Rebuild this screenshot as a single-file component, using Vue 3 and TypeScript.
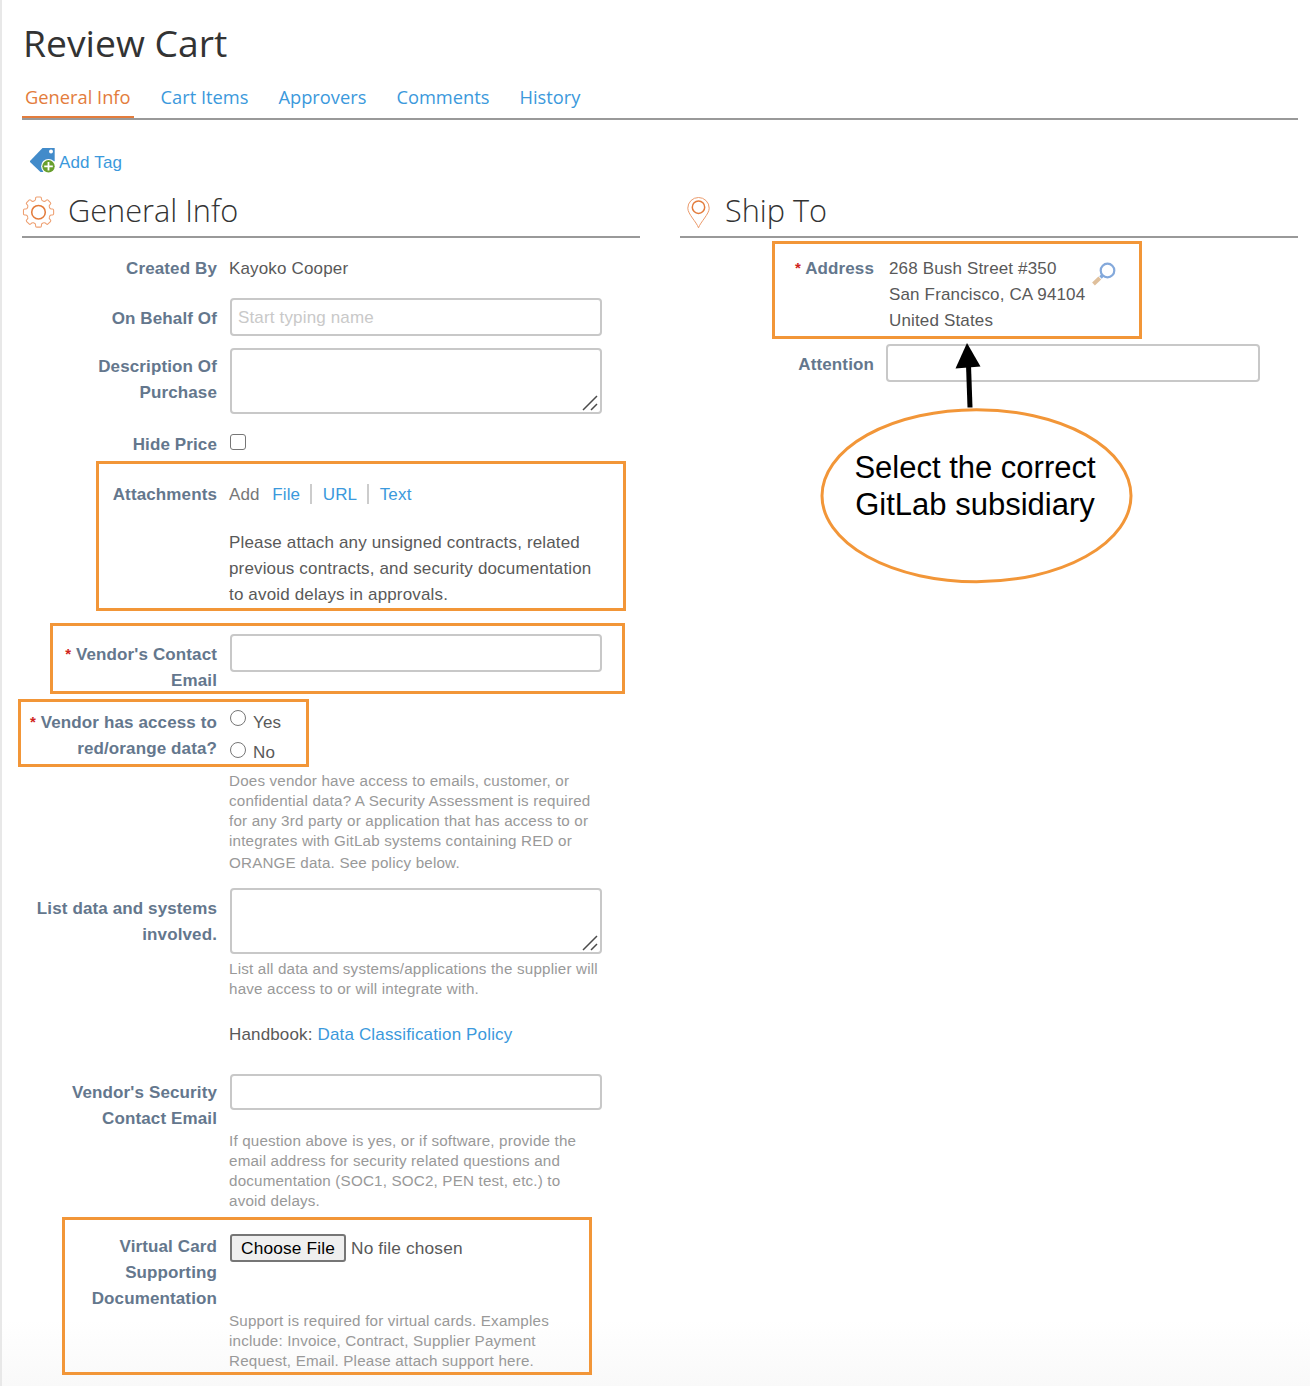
<script setup lang="ts">
import { ref } from 'vue'

const tabs: string[] = ['General Info', 'Cart Items', 'Approvers', 'Comments', 'History']
const activeTab = ref(tabs[0])
const onBehalfOf = ref('')
const description = ref('')
const hidePrice = ref(false)
const vendorEmail = ref('')
const vendorAccess = ref('')
const systems = ref('')
const securityEmail = ref('')
const attention = ref('')
</script>

<template>
  <main class="page">
    <h1 class="title">Review Cart</h1>

    <nav class="tabs">
      <a
        v-for="tab in tabs"
        :key="tab"
        class="tab"
        :class="{ active: tab === activeTab }"
        @click="activeTab = tab"
      >{{ tab }}</a>
    </nav>

    <a class="add-tag">
      <svg width="26" height="26" viewBox="0 0 26 26">
        <path d="M12.5 0H24.700V13L13 24H10.500L0 14V13Z" fill="#428bca" />
        <circle cx="21" cy="3.500" r="2" fill="#fff" />
        <circle cx="18.500" cy="18.300" r="7.400" fill="#fff" />
        <circle cx="18.500" cy="18.300" r="6.200" fill="#689f2d" />
        <path d="M18.500 14v8.600M14.200 18.300h8.600" stroke="#fff" stroke-width="1.800" />
      </svg>
      <span>Add Tag</span>
    </a>

    <div class="columns">
      <section class="column">
        <h2 class="section-title">
          <svg class="gear" width="33" height="32" viewBox="0 0 33 33" fill="none" stroke="#eea072">
            <path
              stroke-width="1.100"
              d="M13.500 2.200Q13.500 1 14.700 1H18.300Q19.500 1 19.500 2.200V3.200Q19.500 4.500 20.700 5L21.800 5.400Q23 5.900 23.900 5L24.600 4.300Q25.500 3.500 26.300 4.300L28.800 6.800Q29.600 7.600 28.800 8.500L28.100 9.200Q27.200 10.100 27.700 11.300L28.100 12.300Q28.600 13.500 29.900 13.500H30.900Q32.100 13.500 32.100 14.700V18.300Q32.100 19.500 30.900 19.500H29.900Q28.600 19.500 28.100 20.700L27.700 21.800Q27.200 23 28.100 23.900L28.800 24.600Q29.600 25.500 28.800 26.300L26.300 28.800Q25.500 29.600 24.600 28.800L23.900 28.100Q23 27.200 21.800 27.700L20.700 28.100Q19.500 28.600 19.500 29.900V30.900Q19.500 32.100 18.300 32.100H14.700Q13.500 32.100 13.500 30.900V29.900Q13.500 28.600 12.300 28.100L11.300 27.700Q10.100 27.200 9.200 28.100L8.500 28.800Q7.600 29.600 6.800 28.800L4.300 26.300Q3.500 25.500 4.300 24.600L5 23.900Q5.900 23 5.400 21.800L5 20.700Q4.500 19.500 3.200 19.500H2.200Q1 19.500 1 18.300V14.700Q1 13.500 2.200 13.500H3.200Q4.500 13.500 5 12.300L5.400 11.300Q5.900 10.100 5 9.200L4.300 8.500Q3.500 7.600 4.300 6.800L6.800 4.300Q7.600 3.500 8.500 4.300L9.200 5Q10.100 5.900 11.300 5.400L12.300 5Q13.500 4.500 13.500 3.200Z"
            />
            <circle cx="16.500" cy="16.700" r="7" stroke="#e37c3c" stroke-width="1.600" />
          </svg>
          <span>General Info</span>
        </h2>

        <div class="row created">
          <div class="label">Created By</div>
          <div class="field">Kayoko Cooper</div>
        </div>

        <div class="row behalf">
          <label class="label">On Behalf Of</label>
          <div class="field"><input v-model="onBehalfOf" class="input" placeholder="Start typing name" /></div>
        </div>

        <div class="row description">
          <label class="label">Description Of<br />Purchase</label>
          <div class="field area-field">
            <textarea v-model="description" class="input area"></textarea>
            <svg class="grip" width="16" height="16" viewBox="0 0 16 16"><path d="M1 15 15 1M9 15l6-6" stroke="#4a4a4a" stroke-width="1.500" /></svg>
          </div>
        </div>

        <div class="row hide-price">
          <label class="label">Hide Price</label>
          <div class="field"><input v-model="hidePrice" type="checkbox" class="check" /></div>
        </div>

        <div class="row attachments">
          <div class="label">Attachments</div>
          <div class="field">
            <div class="attach-links">
              <span class="muted">Add</span><a>File</a><i></i><a>URL</a><i></i><a>Text</a>
            </div>
            <p class="note">Please attach any unsigned contracts, related<br />previous contracts, and security documentation<br />to avoid delays in approvals.</p>
          </div>
        </div>

        <div class="row vendor-email">
          <label class="label"><b class="required">*</b> Vendor's Contact<br />Email</label>
          <div class="field"><input v-model="vendorEmail" class="input" /></div>
        </div>

        <div class="row vendor-access">
          <div class="label"><b class="required">*</b> Vendor has access to<br />red/orange data?</div>
          <div class="field">
            <label class="option"><input v-model="vendorAccess" type="radio" name="access" value="yes" class="check radio" /><span>Yes</span></label>
            <label class="option second"><input v-model="vendorAccess" type="radio" name="access" value="no" class="check radio" /><span>No</span></label>
            <p class="help access-help">Does vendor have access to emails, customer, or<br />confidential data? A Security Assessment is required<br />for any 3rd party or application that has access to or<br />integrates with GitLab systems containing RED or<br /><span class="last-line">ORANGE data. See policy below.</span></p>
          </div>
        </div>

        <div class="row systems">
          <label class="label">List data and systems<br />involved.</label>
          <div class="field area-field">
            <textarea v-model="systems" class="input area"></textarea>
            <svg class="grip" width="16" height="16" viewBox="0 0 16 16"><path d="M1 15 15 1M9 15l6-6" stroke="#4a4a4a" stroke-width="1.500" /></svg>
            <p class="help systems-help">List all data and systems/applications the supplier will<br />have access to or will integrate with.</p>
            <p class="handbook">Handbook: <a>Data Classification Policy</a></p>
          </div>
        </div>

        <div class="row security">
          <label class="label">Vendor's Security<br />Contact Email</label>
          <div class="field">
            <input v-model="securityEmail" class="input short" />
            <p class="help security-help">If question above is yes, or if software, provide the<br />email address for security related questions and<br />documentation (SOC1, SOC2, PEN test, etc.) to<br />avoid delays.</p>
          </div>
        </div>

        <div class="row virtual-card">
          <div class="label">Virtual Card<br />Supporting<br />Documentation</div>
          <div class="field">
            <div class="file"><button type="button">Choose File</button><span>No file chosen</span></div>
            <p class="help card-help">Support is required for virtual cards. Examples<br />include: Invoice, Contract, Supplier Payment<br />Request, Email. Please attach support here.</p>
          </div>
        </div>
      </section>

      <section class="column">
        <h2 class="section-title ship">
          <svg class="pin" width="23" height="32" viewBox="0 0 23 32" fill="none" stroke="#eb9a6b">
            <path d="M11.500 30.800C9.500 25 .8 17 .8 11.200a10.700 10.700 0 0 1 21.400 0C22.200 17 13.500 25 11.500 30.800Z" />
            <circle cx="11.500" cy="10.200" r="6.200" stroke="#e37c3c" stroke-width="1.500" />
          </svg>
          <span>Ship To</span>
        </h2>

        <div class="row address">
          <div class="label"><b class="required">*</b> Address</div>
          <div class="field address-field">
            <div>268 Bush Street #350<br />San Francisco, CA 94104<br />United States</div>
            <svg width="25" height="25" viewBox="0 0 25 25" fill="none">
              <circle cx="15.500" cy="8.500" r="6.800" stroke="#84a9db" stroke-width="2.200" />
              <path d="M11 13 8.500 15.500" stroke="#84a9db" stroke-width="3.400" />
              <path d="M7.800 16 1.500 22" stroke="#dfbf9b" stroke-width="4" />
            </svg>
          </div>
        </div>

        <div class="row attention">
          <label class="label">Attention</label>
          <div class="field"><input v-model="attention" class="input" /></div>
        </div>
      </section>
    </div>

    <!-- Callouts drawn over the form -->
    <div class="mark mark-attachments"></div>
    <div class="mark mark-email"></div>
    <div class="mark mark-access"></div>
    <div class="mark mark-card"></div>
    <div class="mark mark-address"></div>
    <div class="callout">
      <svg width="316" height="244" viewBox="0 0 316 244">
        <path d="M147 0 160.500 23.500 135.500 25.500Z" />
        <path d="M148.500 22 150 64.500" stroke="#000" stroke-width="5" />
        <ellipse cx="156.500" cy="152.700" rx="154.500" ry="86" fill="none" stroke="#f29638" stroke-width="3" />
      </svg>
      <p>Select the correct<br />GitLab subsidiary</p>
    </div>
  </main>
</template>

<style>
body {
  margin: 0;
  background: #fff;
}
</style>

<style scoped>
* {
  box-sizing: border-box;
}
.page {
  position: relative;
  width: 1310px;
  height: 1386px;
  overflow: hidden;
  border-left: 2px solid #e8e8e8;
  padding: 0 12px 0 20px;
  background: linear-gradient(#fff 1320px, #f9f9f9 1386px);
  color: #595959;
  font: 17px/26px "Liberation Sans", Arial, sans-serif;
  letter-spacing: 0.155px;
}
a {
  color: #3b99dc;
  cursor: pointer;
}
p {
  margin: 0;
}
.title {
  margin: 0;
  padding: 17px 0 0 1px;
  height: 84px;
  font: 400 37.300px/52px "Open Sans", sans-serif;
  letter-spacing: 0;
  color: #333;
}
.tabs {
  display: flex;
  gap: 24px;
  height: 36px;
  border-bottom: 2px solid #999;
  font: 18.300px/26px "Open Sans", sans-serif;
  letter-spacing: 0;
}
.tab {
  height: 34px;
  padding: 0 3px;
}
.tab.active {
  color: #e37c3c;
  border-bottom: 2px solid #e37c3c;
}
.add-tag {
  display: flex;
  gap: 3px;
  height: 65px;
  padding: 28px 0 0 8px;
}
.add-tag span {
  padding-top: 2px;
}
.columns {
  display: flex;
  gap: 40px;
}
.column {
  width: 618px;
}
.section-title {
  display: flex;
  margin: 0;
  height: 53px;
  border-bottom: 2px solid #999;
  font: 300 30.700px/50px "Open Sans", sans-serif;
  letter-spacing: 0;
  color: #333;
}
.section-title span {
  margin-left: 13px;
}
.gear {
  margin-top: 11px;
}
.pin {
  margin: 12px 0 0 7px;
}
.ship span {
  margin-left: 15px;
}
.row {
  display: flex;
  gap: 12px;
}
.label {
  width: 195px;
  flex: none;
  padding-top: 1px;
  text-align: right;
  font-weight: 700;
  letter-spacing: 0.12px;
  color: #64778d;
}
.required {
  color: #d0241c;
  font-size: 15px;
  line-height: 1;
  vertical-align: 1px;
}
.field {
  width: 374px;
}
.input {
  display: block;
  width: 372px;
  height: 38px;
  margin: 0 0 0 1px;
  padding: 2px 6px 0;
  border: 2px solid #c8c8c8;
  border-radius: 4px;
  background: #fff;
  font: inherit;
  letter-spacing: inherit;
  color: inherit;
  outline: none;
}
.input::placeholder {
  color: #c9c9c9;
  opacity: 1;
}
.input.short {
  height: 36px;
}
.area {
  height: 66px;
  resize: none;
}
.area-field {
  position: relative;
}
.grip {
  position: absolute;
  left: 353px;
  top: 47px;
}
.created {
  margin-top: 17px;
  height: 43px;
}
.created .field {
  padding-top: 1px;
}
.behalf {
  height: 50px;
}
.behalf .label {
  padding-top: 8px;
}
.description {
  height: 83px;
}
.description .label {
  padding-top: 6px;
}
.hide-price {
  height: 50px;
}
.check {
  appearance: none;
  display: block;
  width: 16px;
  height: 16px;
  margin: 3px 0 0 1px;
  border: 1.500px solid #767676;
  border-radius: 3px;
  background: #fff;
}
.radio {
  margin-top: 0;
  border-radius: 50%;
}
.attachments {
  height: 153px;
}
.attach-links {
  display: flex;
  align-items: center;
  height: 26px;
  margin-bottom: 23px;
}
.attach-links a,
.attach-links span {
  padding-top: 2px;
}
.muted {
  color: #777;
  margin-right: 12.500px;
}
.attach-links i {
  width: 2px;
  height: 20px;
  margin: 0 10.500px 0 10px;
  background: #ccc;
}
.vendor-email {
  height: 75px;
}
.vendor-email .label {
  padding-top: 8px;
}
.vendor-access {
  height: 179px;
}
.option {
  display: flex;
  gap: 7px;
  height: 30px;
}
.option span {
  padding-top: 1px;
}
.option .radio {
  margin-top: 1px;
}
.option.second .radio {
  margin-top: 3px;
}
.help {
  font-size: 15.200px;
  line-height: 20px;
  letter-spacing: 0.18px;
  color: #999;
  white-space: nowrap;
}
.access-help {
  margin-top: 2px;
}
.last-line {
  display: block;
  margin-top: 2px;
}
.systems {
  height: 186px;
}
.systems .label {
  padding-top: 8px;
}
.systems-help {
  padding-top: 5px;
}
.handbook {
  margin-top: 23px;
}
.security {
  height: 159px;
}
.security .label {
  padding-top: 6px;
}
.security-help {
  margin-top: 21px;
}
.file {
  display: flex;
  gap: 5px;
  height: 28px;
  margin: 1px 0 0 1px;
  font-size: 17.300px;
  line-height: 28px;
}
.file button {
  width: 116px;
  height: 28px;
  padding: 0;
  border: 2px solid #767676;
  border-radius: 3px;
  background: #efefef;
  color: #000;
  font: inherit;
  line-height: 24px;
  letter-spacing: inherit;
}
.card-help {
  margin-top: 49px;
}
.note {
  white-space: nowrap;
}
.address {
  margin-top: 17px;
  height: 89px;
}
.address .label,
.attention .label {
  width: 194px;
}
.address-field {
  display: flex;
  gap: 7px;
  padding: 1px 0 0 3px;
}
.address-field svg {
  margin-top: 6px;
}
.attention .label {
  padding-top: 8px;
}
.attention .input {
  width: 374px;
  margin-left: 0;
}
.mark {
  position: absolute;
  border: 3px solid #f29638;
  pointer-events: none;
}
.mark-attachments {
  left: 93.500px;
  top: 460.500px;
  width: 530px;
  height: 150px;
}
.mark-email {
  left: 48px;
  top: 623px;
  width: 575px;
  height: 71px;
}
.mark-access {
  left: 16px;
  top: 699px;
  width: 291px;
  height: 68px;
}
.mark-card {
  left: 60px;
  top: 1217px;
  width: 530px;
  height: 158px;
}
.mark-address {
  left: 770px;
  top: 241px;
  width: 370px;
  height: 98px;
}
.callout {
  position: absolute;
  left: 818px;
  top: 343px;
  width: 316px;
  height: 244px;
}
.callout p {
  position: absolute;
  left: 0;
  top: 106px;
  width: 310px;
  text-align: center;
  font-size: 31px;
  line-height: 37px;
  letter-spacing: 0;
  color: #000;
  white-space: nowrap;
}
</style>
